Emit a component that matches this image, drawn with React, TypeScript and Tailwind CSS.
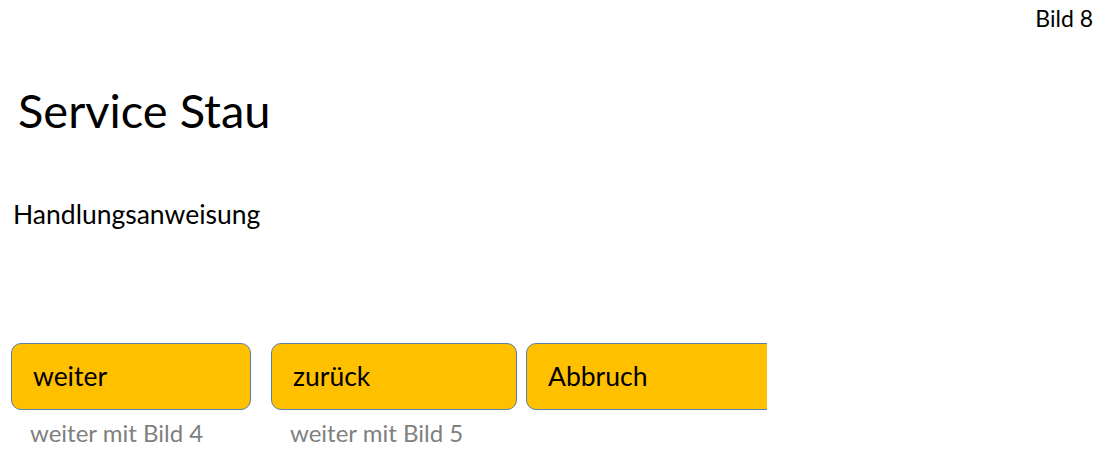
export default function App() {
  const font = { fontFamily: "Lato, 'Open Sans', sans-serif" };
  return (
    <div className="relative h-[454px] w-[1103px] bg-white text-black" style={font}>
      <div className="absolute right-[10px] top-[1px] text-[23px]">Bild 8</div>

      <div className="flex flex-col pl-[13px] pt-[80px]">
        <h1 className="pl-[5px] text-[47px] leading-[60px]">Service Stau</h1>
        <p className="mt-[58px] text-[26.5px] leading-[32px]">Handlungsanweisung</p>

        <div className="mt-[113px] flex items-start -ml-[2px]">
          <div className="flex flex-col">
            <div className="flex h-[67px] w-[240px] items-center rounded-[10px] border border-[#5a7fa8] bg-[#ffc000] pl-[21px] text-[26.5px]">
              weiter
            </div>
            <span className="pl-[19px] pt-[5px] text-[24px] text-[#7f7f7f]">weiter mit Bild 4</span>
          </div>
          <div className="ml-[20px] flex flex-col">
            <div className="flex h-[67px] w-[246px] items-center rounded-[10px] border border-[#5a7fa8] bg-[#ffc000] pl-[21px] text-[26.5px]">
              zurück
            </div>
            <span className="pl-[19px] pt-[5px] text-[24px] text-[#7f7f7f]">weiter mit Bild 5</span>
          </div>
          <div className="ml-[9px] w-[241px] overflow-hidden">
            <div className="flex h-[67px] w-[250px] items-center rounded-[10px] border border-[#5a7fa8] bg-[#ffc000] pl-[21px] text-[26.5px]">
              Abbruch
            </div>
          </div>
        </div>
      </div>
    </div>
  );
}
